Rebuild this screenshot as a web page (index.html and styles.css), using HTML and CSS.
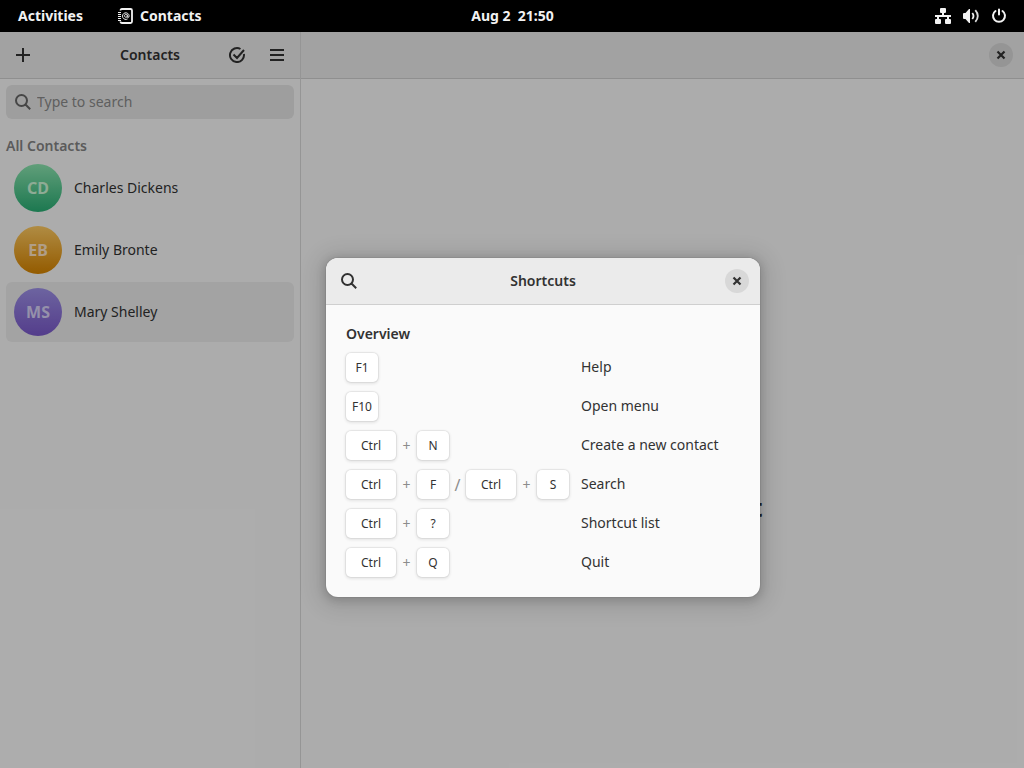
FILE: index.html
```html
<!DOCTYPE html>
<html lang="en">
<head>
<meta charset="utf-8">
<title>Contacts</title>
<link rel="stylesheet" href="styles.css">
</head>
<body>
<header class="topbar">
  <div class="topbar-start">
    <button class="panel-button">Activities</button>
    <button class="panel-button panel-app">
      <svg class="icon" viewBox="0 0 16 16" aria-hidden="true">
        <path d="M3.500 2.500V2.500Q3.500 1 5 1H13.500Q15 1 15 2.500V13.500Q15 15 13.500 15H5Q3.500 15 3.500 13.500" fill="none" stroke="currentColor" stroke-width="1.800"/>
        <path d="M1 4.500H4M1 6.500H4M1 8.500H4M1 10.500H4M1 12.500H4" stroke="currentColor" stroke-width="1"/>
        <path d="M10.600 10.900A3.300 3.300 0 1 1 12.100 7.700Q12.100 9.500 11.100 9.500T10.300 8.500V6.500M10.300 8A1.400 1.500 0 1 1 10.300 7.600" fill="none" stroke="currentColor" stroke-width="1"/>
      </svg>
      Contacts
    </button>
  </div>
  <button class="panel-button clock">Aug 2&nbsp; 21:50</button>
  <button class="panel-button status" aria-label="System">
    <svg class="icon" viewBox="0 0 16 16" aria-hidden="true">
      <path d="M6 0H10Q11 0 11 1V4Q11 5 10 5H9V7H16V9H14V11H15Q16 11 16 12V15Q16 16 15 16H11Q10 16 10 15V12Q10 11 11 11H12V9H4V11H5Q6 11 6 12V15Q6 16 5 16H1Q0 16 0 15V12Q0 11 1 11H2V9H0V7H7V5H6Q5 5 5 4V1Q5 0 6 0Z" fill="currentColor"/>
    </svg>
    <svg class="icon" viewBox="0 0 16 16" aria-hidden="true">
      <path d="M7 1V15H6L2.500 11H1Q0 11 0 10V6Q0 5 1 5H2.500L6 1Z" fill="currentColor"/>
      <path d="M9.300 5Q11.700 8 9.300 11" fill="none" stroke="currentColor" stroke-width="1.800"/>
      <path d="M12.300 2.200Q17.300 8 12.300 13.800" fill="none" stroke="currentColor" stroke-width="1.800" opacity=".9"/>
    </svg>
    <svg class="icon" viewBox="0 0 16 16" aria-hidden="true">
      <path d="M4.500 3A6 6 0 1 0 11.500 3M8 1.500V6.500" fill="none" stroke="currentColor" stroke-width="2" stroke-linecap="round"/>
    </svg>
  </button>
</header>

<div class="app">
  <aside class="sidebar">
    <div class="headerbar">
      <div class="header-side">
        <button class="flat" aria-label="Create new contact">
          <svg class="icon" viewBox="0 0 16 16" aria-hidden="true"><path d="M8 1V15M1 8H15" stroke="currentColor" stroke-width="2"/></svg>
        </button>
      </div>
      <h1 class="title">Contacts</h1>
      <div class="header-side header-end">
        <button class="flat" aria-label="Select items">
          <svg class="icon" viewBox="0 0 16 16" aria-hidden="true"><path d="M11.500 2A7 7 0 1 0 14.900 7M4.500 7.500L8 11L15 3" fill="none" stroke="currentColor" stroke-width="2"/></svg>
        </button>
        <button class="flat" aria-label="Main menu">
          <svg class="icon" viewBox="0 0 16 16" aria-hidden="true"><path d="M1 3H15M1 8H15M1 13H15" stroke="currentColor" stroke-width="2"/></svg>
        </button>
      </div>
    </div>
    <label class="search">
      <svg class="icon" viewBox="0 0 16 16" aria-hidden="true"><path d="M12 6.500A5.500 5.500 0 1 1 1 6.500A5.500 5.500 0 1 1 12 6.500M10.500 10.500L15.200 15.200" fill="none" stroke="currentColor" stroke-width="2"/></svg>
      <input type="search" class="search-input" placeholder="Type to search" aria-label="Search contacts">
    </label>
    <h2 class="list-title">All Contacts</h2>
    <ul class="contacts">
      <li><button class="contact"><span class="avatar green">CD</span>Charles Dickens</button></li>
      <li><button class="contact"><span class="avatar orange">EB</span>Emily Bronte</button></li>
      <li><button class="contact selected"><span class="avatar purple">MS</span>Mary Shelley</button></li>
    </ul>
  </aside>
  <main class="content">
    <div class="headerbar content-header">
      <button class="close" aria-label="Close window">
        <svg class="icon" viewBox="0 0 16 16" aria-hidden="true"><path d="M4.500 4.500L11.500 11.500M11.500 4.500L4.500 11.500" stroke="currentColor" stroke-width="2.200"/></svg>
      </button>
    </div>
    <div class="status-page"><h2 class="status-title">Select a Contact</h2></div>
  </main>
  <div class="dim"></div>
</div>

<section class="dialog" role="dialog" aria-labelledby="dialog-title">
  <div class="headerbar">
    <div class="header-side">
      <button class="flat" aria-label="Search shortcuts">
        <svg class="icon" viewBox="0 0 16 16" aria-hidden="true"><path d="M12 6.500A5.500 5.500 0 1 1 1 6.500A5.500 5.500 0 1 1 12 6.500M10.500 10.500L15.200 15.200" fill="none" stroke="currentColor" stroke-width="2"/></svg>
      </button>
    </div>
    <h2 class="title" id="dialog-title">Shortcuts</h2>
    <div class="header-side header-end dialog-end">
      <button class="close" aria-label="Close dialog">
        <svg class="icon" viewBox="0 0 16 16" aria-hidden="true"><path d="M4.500 4.500L11.500 11.500M11.500 4.500L4.500 11.500" stroke="currentColor" stroke-width="2.200"/></svg>
      </button>
    </div>
  </div>
  <div class="dialog-body">
    <h3 class="group-title">Overview</h3>
    <dl class="shortcuts">
      <dt class="keys"><kbd>F1</kbd></dt><dd>Help</dd>
      <dt class="keys"><kbd>F10</kbd></dt><dd>Open menu</dd>
      <dt class="keys"><kbd class="wide">Ctrl</kbd><span class="plus">+</span><kbd>N</kbd></dt><dd>Create a new contact</dd>
      <dt class="keys"><kbd class="wide">Ctrl</kbd><span class="plus">+</span><kbd>F</kbd><span class="or">/</span><kbd class="wide">Ctrl</kbd><span class="plus">+</span><kbd>S</kbd></dt><dd>Search</dd>
      <dt class="keys"><kbd class="wide">Ctrl</kbd><span class="plus">+</span><kbd>?</kbd></dt><dd>Shortcut list</dd>
      <dt class="keys"><kbd class="wide">Ctrl</kbd><span class="plus">+</span><kbd>Q</kbd></dt><dd>Quit</dd>
    </dl>
  </div>
</section>
</body>
</html>
```
FILE: styles.css
```css
* { box-sizing: border-box; }

body {
  margin: 0;
  min-height: 100vh;
  display: flex;
  flex-direction: column;
  background: #fafafa;
  color: #323232;
  font: 14px/20px "Noto Sans", sans-serif;
}

h1, h2, h3, ul, dl, dd { margin: 0; padding: 0; }
ul { list-style: none; }
button {
  border: 0;
  padding: 0;
  background: none;
  color: inherit;
  font: inherit;
}
.icon { width: 16px; height: 16px; flex: none; display: block; }

/* Shell panel */
.topbar {
  display: grid;
  grid-template-columns: 1fr auto 1fr;
  align-items: center;
  height: 32px;
  padding: 0 17px 0 18px;
  background: #000;
  color: #f2f2f2;
}
.topbar-start { display: flex; gap: 34px; }
.panel-button { display: flex; align-items: center; font-weight: 700; }
.panel-app { gap: 7px; }
.status { justify-self: end; gap: 12px; }

/* Main window */
.app { position: relative; flex: 1; display: flex; }
.sidebar {
  flex: none;
  width: 301px;
  border-right: 1px solid #d8d8d8;
}
.content { flex: 1; display: flex; flex-direction: column; }
.dim { position: absolute; inset: 0; background: rgba(0, 0, 0, .31); }

.headerbar {
  display: grid;
  grid-template-columns: 1fr auto 1fr;
  align-items: center;
  height: 47px;
  padding: 0 6px;
  background: #ebebeb;
  border-bottom: 1px solid #cfcfcf;
}
.content-header { display: flex; justify-content: flex-end; padding: 0 11px; }
.header-side { display: flex; gap: 6px; }
.header-end { justify-content: flex-end; }
.dialog-end { padding-right: 5px; }
.title { font-size: 14px; line-height: 20px; font-weight: 600; }
.flat { display: grid; place-items: center; width: 34px; height: 34px; border-radius: 6px; }
.close {
  display: grid;
  place-items: center;
  width: 24px;
  height: 24px;
  border-radius: 50%;
  background: #d8d8d8;
}

.search {
  display: flex;
  align-items: center;
  gap: 6px;
  height: 34px;
  margin: 6px 6px 0;
  padding: 0 9px;
  border-radius: 6px;
  background: #e5e5e5;
  color: #666;
}
.search-input {
  flex: 1;
  min-width: 0;
  border: 0;
  padding: 0;
  outline: 0;
  background: none;
  color: inherit;
  font: inherit;
}
.search-input::placeholder { color: #8a8a8a; opacity: 1; }

.list-title {
  padding: 17px 6px 2px;
  color: #858585;
  font-size: 14px;
  line-height: 20px;
  font-weight: 600;
}
.contacts { display: grid; gap: 2px; padding: 0 6px; }
.contact {
  display: flex;
  align-items: center;
  gap: 12px;
  width: 100%;
  height: 60px;
  padding: 0 8px;
  border-radius: 6px;
}
.selected { background: #ececec; }
.avatar {
  display: grid;
  place-items: center;
  width: 48px;
  height: 48px;
  border-radius: 50%;
  font-size: 16px;
  font-weight: 700;
}
.green { background: linear-gradient(#8de6b1, #29ae74); color: #cef8d8; }
.orange { background: linear-gradient(#ffcb62, #d68400); color: #ffe5c5; }
.purple { background: linear-gradient(#9e91e8, #7a59ca); color: #d8d3f7; }

.status-page { flex: 1; padding-top: 411px; text-align: center; }
.status-title { font-size: 25px; line-height: 34px; }

/* Shortcuts window, floating over the main one */
.dialog {
  position: absolute;
  left: 326px;
  top: 258px;
  width: 434px;
  border-radius: 12px;
  overflow: hidden;
  background: #fafafa;
  box-shadow: 0 2px 8px 2px rgba(0, 0, 0, .15), 0 3px 20px 10px rgba(0, 0, 0, .09), 0 0 0 1px rgba(0, 0, 0, .05);
}
.dialog-body { padding: 19px 20px 20px; }
.group-title { font-size: 14px; line-height: 20px; font-weight: 600; margin-bottom: 9px; }
.shortcuts {
  display: grid;
  grid-template-columns: auto 1fr;
  column-gap: 12px;
  row-gap: 10px;
  align-items: start;
  line-height: 28px;
}
.keys { display: flex; align-items: center; }
kbd {
  min-width: 32px;
  padding: 5px 6px 4px;
  border-radius: 5px;
  background: #fff;
  box-shadow: 0 0 0 1px rgba(0, 0, 0, .05), 0 1px 3px 1px rgba(0, 0, 0, .09);
  font: 12px/20px "Noto Sans", sans-serif;
  text-align: center;
}
.wide { min-width: 50px; }
.plus, .or { color: #8c8c8c; text-align: center; font-size: 14px; }
.plus { width: 21px; }
.or { width: 17px; font-size: 16px; }
```
